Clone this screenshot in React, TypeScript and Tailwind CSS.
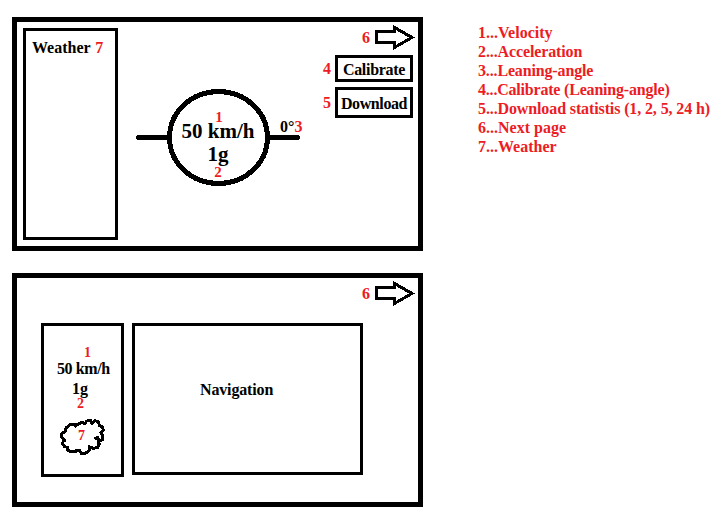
import type { ReactNode } from "react";

const legend = [
  { text: "1...Velocity", tracking: "" },
  { text: "2...Acceleration", tracking: "tracking-[-0.12px]" },
  { text: "3...Leaning-angle", tracking: "tracking-[-0.15px]" },
  { text: "4...Calibrate (Leaning-angle)", tracking: "tracking-[-0.2px]" },
  { text: "5...Download statistis (1, 2, 5, 24 h)", tracking: "tracking-[-0.12px]" },
  { text: "6...Next page", tracking: "" },
  { text: "7...Weather", tracking: "" },
];

function Mark({ children, className = "" }: { children: ReactNode; className?: string }) {
  return <span className={`text-[#ed1c24] ${className}`}>{children}</span>;
}

function NextArrow() {
  return (
    <svg width="40" height="26" viewBox="0 0 40 26" fill="none" stroke="black" strokeWidth="3" shapeRendering="crispEdges">
      <path d="M1.5 6.5H19.5V2.5L37 12.5L19.5 22.5V17.5H1.5Z" />
    </svg>
  );
}

function Screen({ children }: { children: ReactNode }) {
  return <section className="flex h-[234px] w-[411px] border-[5px] border-black">{children}</section>;
}

function Gauge() {
  return (
    <div className="relative mt-[67px] ml-[18px] h-[97px] w-[164px] shrink-0">
      <svg className="absolute inset-0" width="164" height="97" fill="none" stroke="black" strokeWidth="5" shapeRendering="crispEdges">
        <path d="M2.5 48.5H33M132 48.5H161.5" strokeLinecap="round" />
        <ellipse cx="82.5" cy="48.5" rx="49" ry="46" />
      </svg>
      <div className="relative flex flex-col items-center pt-6">
        <Mark className="ml-[2px] text-[15px] leading-[9px]">1</Mark>
        <span className="text-[21px] leading-[18px]">50 km/h</span>
        <span className="mt-[3px] text-[21px] leading-[22px]">1g</span>
        <Mark className="mt-[2px] text-[15px] leading-[11px]">2</Mark>
      </div>
      <div className="absolute top-[30px] left-[144px] leading-4">
        0°<Mark>3</Mark>
      </div>
    </div>
  );
}

function Cloud() {
  return (
    <div className="relative mt-[8px] ml-[16px] flex h-[37px] w-[45px] justify-center">
      <svg className="absolute inset-0" width="45" height="37" viewBox="90 267 135 111" fill="none" stroke="black" strokeWidth="9" strokeLinejoin="round" strokeLinecap="round" shapeRendering="crispEdges">
        <path d="M136 288L133 282L120 284L109 293L105 304L95 312L95 322L105 331L100 332L98 341L103 350L113 352L113 360L121 364L135 366L140 360L148 361L154 370L168 369L178 360L178 350L190 355L203 352L208 342L204 333L205 327L196 325L204 323L206 333L217 330L219 318L213 308L220 300L217 290L208 287L206 276L195 272L186 280L182 272L170 273L165 281L155 277L145 283L136 284" />
      </svg>
      <Mark className="relative mt-[9px] mr-[2px] text-sm leading-4">7</Mark>
    </div>
  );
}

export default function App() {
  return (
    <main className="flex h-[521px] w-[716px] bg-white pt-[17px] pl-3 font-['Liberation_Serif',serif] text-base font-bold whitespace-nowrap text-black">
      <div className="flex flex-col gap-[22px]">
        <Screen>
          <div className="mt-[6px] ml-[6px] h-[212px] w-[95px] shrink-0 border-[3px] border-black pt-[9px] pl-[6px] leading-4">
            Weather <Mark className="ml-px">7</Mark>
          </div>
          <Gauge />
          <div className="flex flex-1 flex-col items-end pt-[3px] pr-[5px]">
            <div className="-mr-[2px] flex gap-[5px]">
              <Mark className="mt-[5px] leading-4">6</Mark>
              <NextArrow />
            </div>
            <div className="mt-1 flex gap-1">
              <Mark className="mt-[6px] leading-4">4</Mark>
              <div className="flex h-[27px] w-[78px] justify-center border-[3px] border-black pt-1 leading-4 tracking-[-0.3px]">Calibrate</div>
            </div>
            <div className="mt-[5px] flex gap-1">
              <Mark className="mt-2 leading-4">5</Mark>
              <div className="flex h-[31px] w-[78px] justify-center border-[3px] border-black pt-[6px] leading-4 tracking-[-0.4px]">Download</div>
            </div>
          </div>
        </Screen>
        <Screen>
          <div className="flex flex-1 flex-col">
            <div className="flex justify-end gap-[5px] pt-[3px] pr-[3px]">
              <Mark className="mt-[5px] leading-4">6</Mark>
              <NextArrow />
            </div>
            <div className="mt-4 ml-6 flex items-start gap-2">
              <div className="flex h-[154px] w-[83px] flex-col items-start border-[3px] border-black pt-[18px]">
                <Mark className="ml-10 text-sm leading-[17px]">1</Mark>
                <span className="ml-[13px] leading-4 tracking-[-0.4px]">50 km/h</span>
                <span className="mt-1 ml-[28px] leading-4">1g</span>
                <Mark className="ml-[33px] text-sm leading-[14px]">2</Mark>
                <Cloud />
              </div>
              <div className="flex h-[152px] w-[231px] border-[3px] border-black pt-[56px] pl-[65px] leading-4 tracking-[-0.15px]">Navigation</div>
            </div>
          </div>
        </Screen>
      </div>
      <ul className="mt-[6px] ml-[55px] leading-[19px] text-[#ed1c24]">
        {legend.map(({ text, tracking }) => (
          <li key={text} className={tracking}>{text}</li>
        ))}
      </ul>
    </main>
  );
}
